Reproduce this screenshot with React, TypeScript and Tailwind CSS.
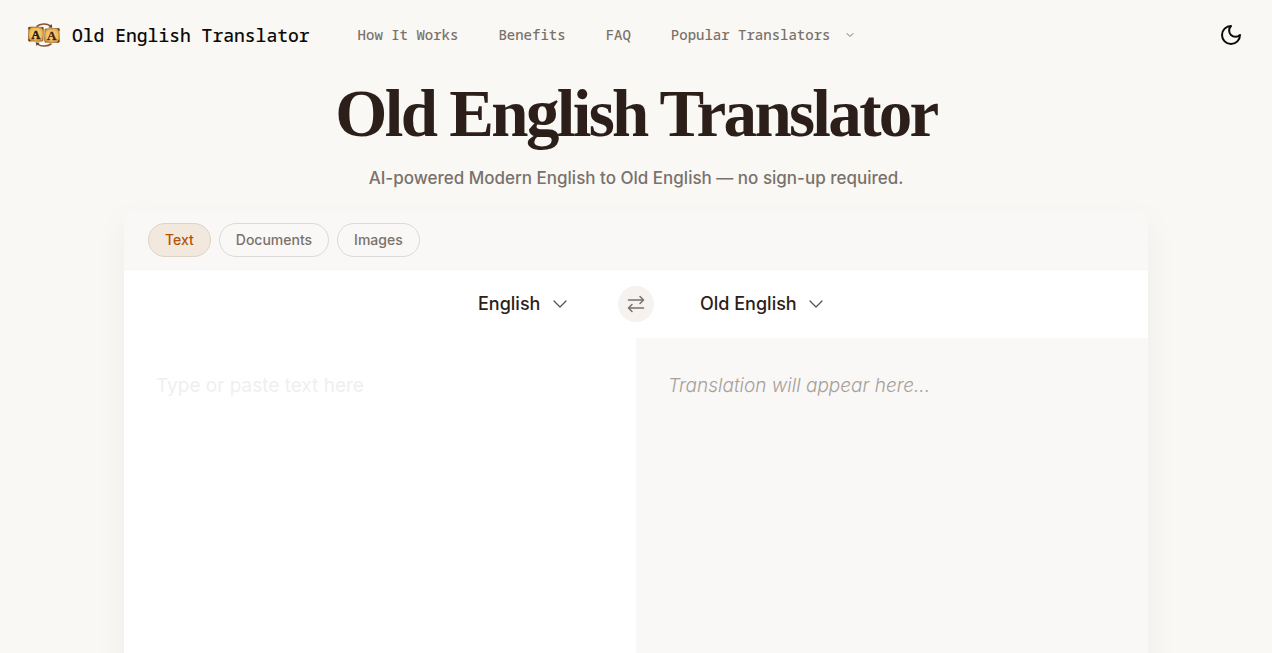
import { useState } from 'react';

import { ChevronDown } from 'lucide-react';

const navLinks = [
  { label: 'How It Works', href: '#how-it-works' },
  { label: 'Benefits', href: '#benefits' },
  { label: 'FAQ', href: '#faq' },
];

const tabs = ['Text', 'Documents', 'Images'];

const Logo = () =>
{
  return (
    <svg viewBox="0 0 32 24" className="h-6 w-8" aria-hidden="true">
      <defs>
        <radialGradient id="parchment" cx="0.5" cy="0.5" r="0.7">
          <stop offset="0" stopColor="#fbdc8c" />
          <stop offset="0.6" stopColor="#efbb56" />
          <stop offset="1" stopColor="#b06c1c" />
        </radialGradient>
      </defs>
      <path d="M8.5 3.6C12 .4 19 .2 22.5 3" fill="none" stroke="#8a5230" strokeWidth="1.6" />
      <path d="M20.3 4.4 24.4 4.8 23.5 1z" fill="#6f3d20" />
      <path d="M23.5 20.6C20 23.7 13 23.8 9.5 21" fill="none" stroke="#8a5230" strokeWidth="1.6" />
      <path d="M11.7 19.7 7.6 19.3 8.6 23z" fill="#6f3d20" />
      <path d="M.5 4.5 3 4l12 .4.4 2-.4 11.3-2 .5L1 18l-.6-2 .4-9z" fill="url(#parchment)" stroke="#8f5a1c" strokeWidth=".7" />
      <path d="M17 6l13.5-.6 1 1.2-.5 2 .4 10-1.4.8-13-.2-.5-2 .4-8z" fill="url(#parchment)" stroke="#8f5a1c" strokeWidth=".7" />
      <path d="M.5 4.3h2.4L.8 7zM15.3 4.4l-2.2.2 2 2.2zM31.5 5.4l-2.4.2 2 2.5zM31.4 19.2l-2.4.2 2-2.7zM.5 18.2l2.4.1L.7 15.5z" fill="#5f3318" />
      <text
        x="7.8"
        y="15.5"
        textAnchor="middle"
        fill="#33180a"
        stroke="#33180a"
        strokeWidth=".5"
        className="font-['Liberation_Serif',serif] text-[12px] font-bold"
      >
        A
      </text>
      <text
        x="23.8"
        y="17"
        textAnchor="middle"
        fill="#4a200c"
        stroke="#4a200c"
        strokeWidth=".3"
        className="font-['Liberation_Serif',serif] text-[13px] font-bold"
      >
        A
      </text>
    </svg>
  )
}

type LanguageSelectProps = {
  label: string;
  value: string;
  className: string;
}

const LanguageSelect = ({ label, value, className }: LanguageSelectProps) =>
{
  return (
    <div className="relative">
      <select
        aria-label={label}
        defaultValue={value}
        className={`h-9 appearance-none bg-transparent text-lg leading-9 font-medium text-[#2c1e18] ${className}`}
      >
        <option>{value}</option>
      </select>
      <ChevronDown className="pointer-events-none absolute top-1.5 right-0 size-6 text-stone-600" strokeWidth={1.25} />
    </div>
  )
}

const App = () =>
{
  const [activeTab, setActiveTab] = useState('Text');
  const [text, setText] = useState('');

  return (
    <div className="h-screen overflow-hidden bg-[#f9f8f4] font-['Inter',sans-serif]">
      <header className="flex h-[70px] items-center px-7 font-['Noto_Sans_Mono','DejaVu_Sans_Mono',monospace]">
        <a href="#" className="flex items-center gap-3 text-lg font-medium text-stone-950">
          <Logo />
          Old English Translator
        </a>
        <nav className="ml-12 flex items-center gap-10 text-sm font-medium text-stone-500">
          {
            navLinks.map((link) => (
              <a key={link.href} href={link.href}>{link.label}</a>
            ))
          }
          <button type="button" className="flex items-center gap-3.5">
            Popular Translators
            <ChevronDown className="size-3" />
          </button>
        </nav>
        <button type="button" aria-label="Toggle dark mode" className="ml-auto text-stone-950">
          <svg
            viewBox="0 0 24 24"
            className="mr-px size-6"
            fill="none"
            stroke="currentColor"
            strokeWidth="2"
            strokeLinecap="round"
            strokeLinejoin="round"
          >
            <path d="M12 3a6 6 0 0 0 9 9 9 9 0 1 1-9-9Z" />
          </svg>
        </button>
      </header>

      <main>
        <div className="px-6 text-center">
          <h1 className="pt-2 font-['Liberation_Serif',serif] text-[67px] leading-[70px] font-bold tracking-[-0.04em] text-[#2c1e18]">
            Old English Translator
          </h1>
          <p className="mt-4 text-[17px] leading-7 font-medium text-stone-500">
            AI-powered Modern English to Old English — no sign-up required.
          </p>
        </div>

        <section className="mx-auto mt-[19px] max-w-5xl bg-white shadow-[0_12px_32px_rgba(28,25,23,0.05)]">
          <div className="flex gap-2 border-b border-[#f5f4f2] bg-[#f9f8f6] px-6 py-3">
            {
              tabs.map((tab) => (
                <button
                  key={tab}
                  type="button"
                  onClick={() => setActiveTab(tab)}
                  className={
                    tab === activeTab
                      ? 'rounded-full border border-[#ddd3c8] bg-[#f2e8dd] px-4 py-1.5 text-sm font-medium text-[#b45309]'
                      : 'rounded-full border border-[#dcd9d6] px-4 py-1.5 text-sm font-medium text-stone-500'
                  }
                >
                  {tab}
                </button>
              ))
            }
          </div>

          <div className="grid grid-cols-[1fr_36px_1fr] items-center gap-[46px] py-4">
            <div className="flex justify-end">
              <LanguageSelect label="Source language" value="English" className="w-[94px] pr-6" />
            </div>
            <button
              type="button"
              aria-label="Swap languages"
              className="flex size-9 items-center justify-center rounded-full bg-[#f5f2ef] text-stone-500"
            >
              <svg
                viewBox="0 0 20 20"
                className="size-5"
                fill="none"
                stroke="currentColor"
                strokeWidth="1.5"
                strokeLinecap="round"
                strokeLinejoin="round"
              >
                <path d="M2.5 6h15M14 2.5 17.5 6 14 9.5M17.5 14h-15M6 10.5 2.5 14 6 17.5" />
              </svg>
            </button>
            <div className="flex">
              <LanguageSelect label="Target language" value="Old English" className="w-[128px] pr-6" />
            </div>
          </div>

          <div className="grid grid-cols-2">
            <textarea
              aria-label="Text to translate"
              value={text}
              onChange={(e) => setText(e.target.value)}
              placeholder="Type or paste text here"
              className="h-96 resize-none p-8 text-[19px] leading-8 text-[#2c1e18] placeholder:text-[#f0efee]"
            />
            <div className="bg-[#f9f8f6] p-8 text-[19px] leading-8 font-light text-stone-400 italic">
              Translation will appear here...
            </div>
          </div>
        </section>
      </main>
    </div>
  )
}

export default App;
